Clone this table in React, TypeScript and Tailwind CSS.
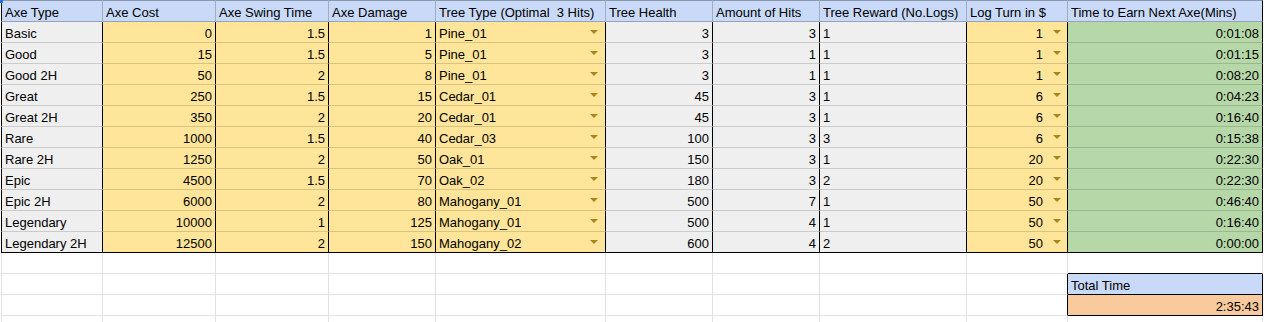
import React from 'react';

type Row = [string, number, number, number, string, number, number, number, number, string];

const headers = [
  'Axe Type',
  'Axe Cost',
  'Axe Swing Time',
  'Axe Damage',
  'Tree Type (Optimal  3 Hits)',
  'Tree Health',
  'Amount of Hits',
  'Tree Reward (No.Logs)',
  'Log Turn in $',
  'Time to Earn Next Axe(Mins)',
];

const rows: Row[] = [
  ['Basic', 0, 1.5, 1, 'Pine_01', 3, 3, 1, 1, '0:01:08'],
  ['Good', 15, 1.5, 5, 'Pine_01', 3, 1, 1, 1, '0:01:15'],
  ['Good 2H', 50, 2, 8, 'Pine_01', 3, 1, 1, 1, '0:08:20'],
  ['Great', 250, 1.5, 15, 'Cedar_01', 45, 3, 1, 6, '0:04:23'],
  ['Great 2H', 350, 2, 20, 'Cedar_01', 45, 3, 1, 6, '0:16:40'],
  ['Rare', 1000, 1.5, 40, 'Cedar_03', 100, 3, 3, 6, '0:15:38'],
  ['Rare 2H', 1250, 2, 50, 'Oak_01', 150, 3, 1, 20, '0:22:30'],
  ['Epic', 4500, 1.5, 70, 'Oak_02', 180, 3, 2, 20, '0:22:30'],
  ['Epic 2H', 6000, 2, 80, 'Mahogany_01', 500, 7, 1, 50, '0:46:40'],
  ['Legendary', 10000, 1, 125, 'Mahogany_01', 500, 4, 1, 50, '0:16:40'],
  ['Legendary 2H', 12500, 2, 150, 'Mahogany_02', 600, 4, 2, 50, '0:00:00'],
];

// background per column of the data rows
const colBg = [
  'bg-[#efefef]',
  'bg-[#ffe599]',
  'bg-[#ffe599]',
  'bg-[#ffe599]',
  'bg-[#ffe599]',
  'bg-[#efefef]',
  'bg-[#efefef]',
  'bg-[#efefef]',
  'bg-[#ffe599]',
  'bg-[#b6d7a8]',
];

const rightAligned = [false, true, true, true, false, true, true, false, true, true];

function Arrow() {
  return (
    <svg width="8" height="4" viewBox="0 0 8 4" className="shrink-0">
      <polygon points="0,0 8,0 4,4" fill="#a8861d" />
    </svg>
  );
}

function DataCell({ value, col, last }: { value: string | number; col: number; last: boolean }) {
  const base = `h-[21px] overflow-hidden whitespace-nowrap leading-[23px] border-r border-r-black ${colBg[col]} ${
    last ? 'border-b border-b-black' : 'border-b border-b-black/15'
  } ${col === 0 ? 'border-l border-l-black' : ''}`;

  if (col === 4) {
    return (
      <div className={`${base} flex items-center justify-between pl-[3px] pr-[7px]`}>
        <span className="leading-[23px] self-start">{value}</span>
        <Arrow />
      </div>
    );
  }
  if (col === 8) {
    return (
      <div className={`${base} flex items-center justify-end gap-[10px] pr-[6px]`}>
        <span className="leading-[23px] self-start">{value}</span>
        <Arrow />
      </div>
    );
  }
  return (
    <div className={`${base} ${rightAligned[col] ? 'text-right pr-[3px]' : 'pl-[3px]'}`}>{value}</div>
  );
}

export default function App() {
  const emptyRows = [0, 1, 2, 3];

  return (
    <div
      className="relative w-[1264px] h-[322px] overflow-hidden bg-white pl-px text-[13px] text-black"
      style={{ fontFamily: '"Liberation Sans", Arial, sans-serif' }}
    >
      <div className="absolute left-0 top-0 w-[3px] h-[3px] bg-[#1a73e8]" />
      <div className="grid grid-cols-[102px_113px_113px_107px_170px_107px_107px_147px_101px_195px]">
        {headers.map((h, i) => (
          <div
            key={h}
            className={`h-[22px] overflow-hidden whitespace-pre pl-[3px] leading-[23px] bg-[#c9daf8] border-t border-t-black/30 border-b border-b-black/25 border-r ${
              i === 9 ? 'border-r-black' : 'border-r-black/20'
            } ${i === 0 ? 'border-l border-l-black' : ''}`}
          >
            {h}
          </div>
        ))}

        {rows.map((r, ri) =>
          r.map((v, ci) => <DataCell key={`${ri}-${ci}`} value={v} col={ci} last={ri === rows.length - 1} />)
        )}

        {emptyRows.map((er) =>
          headers.map((_, ci) => {
            const isTotalLabel = er === 1 && ci === 9;
            const isTotalValue = er === 2 && ci === 9;
            const aboveTotal = er === 0 && ci === 9;
            const leftOfTotal = (er === 1 || er === 2) && ci === 8;
            let cls = 'h-[21px] overflow-hidden whitespace-nowrap leading-[23px] border-r border-b ';
            cls += leftOfTotal || isTotalLabel || isTotalValue ? 'border-r-black ' : 'border-r-[#e2e2e2] ';
            cls += aboveTotal || isTotalLabel || isTotalValue ? 'border-b-black ' : 'border-b-[#e2e2e2] ';
            if (ci === 0) cls += 'border-l border-l-[#e2e2e2] ';
            if (isTotalLabel) cls += 'bg-[#c9daf8] pl-[3px]';
            if (isTotalValue) cls += 'bg-[#f9cb9c] text-right pr-[3px]';
            return (
              <div key={`e-${er}-${ci}`} className={cls}>
                {isTotalLabel ? 'Total Time' : isTotalValue ? '2:35:43' : ''}
              </div>
            );
          })
        )}
      </div>
    </div>
  );
}
